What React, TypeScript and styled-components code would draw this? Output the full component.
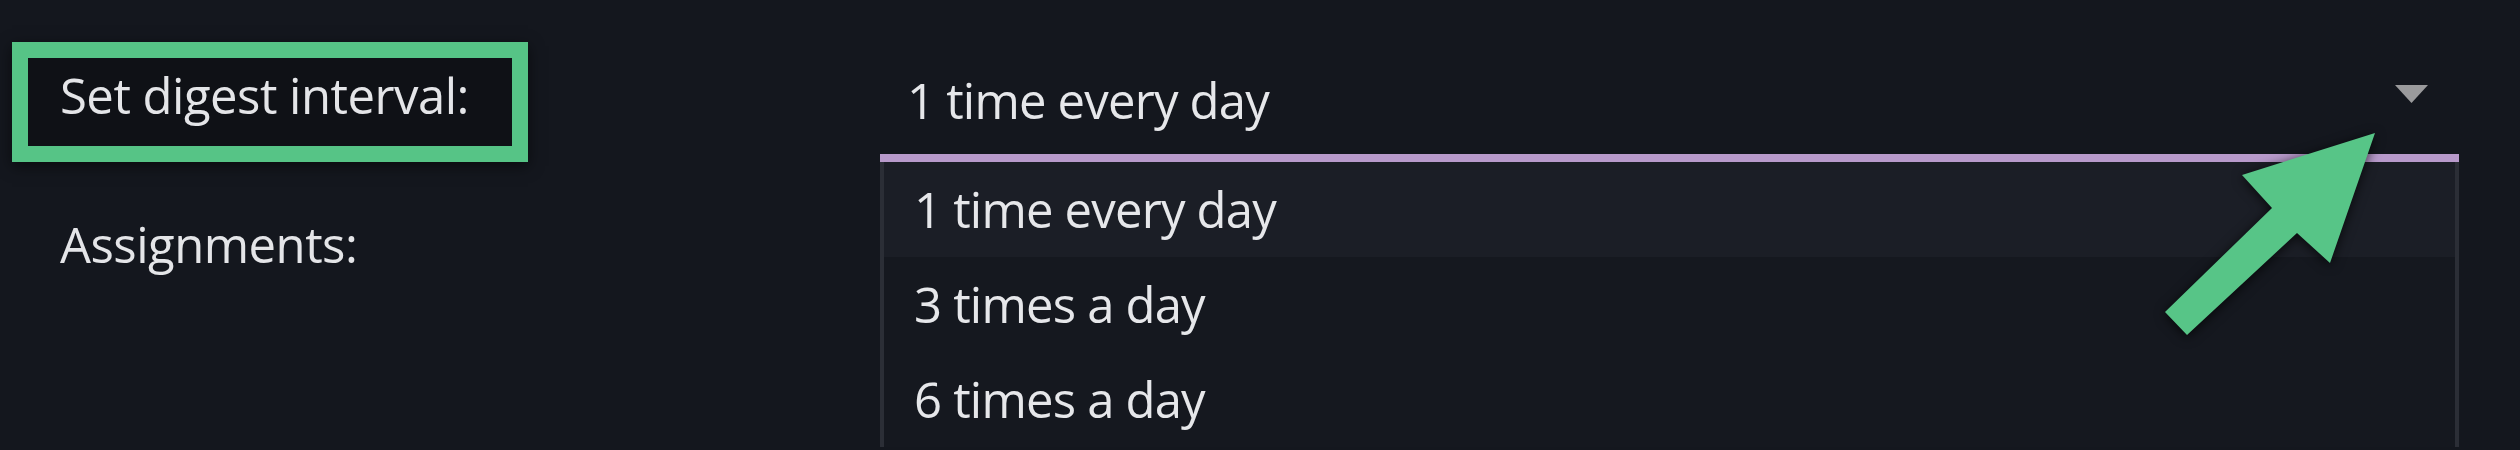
import React from "react";
import styled, { createGlobalStyle } from "styled-components";

const GlobalStyle = createGlobalStyle`
  html, body {
    margin: 0;
    padding: 0;
    background: #14171e;
  }
  body {
    font-family: "Open Sans", "Noto Sans", "DejaVu Sans", sans-serif;
    color: #e4e5e8;
  }
`;

const Page = styled.div`
  position: relative;
  width: 2520px;
  height: 450px;
  overflow: hidden;
  background: #14171e;
  box-sizing: border-box;
  padding: 42px 0 0 12px;
`;

const Form = styled.div`
  display: grid;
  grid-template-columns: 868px 1579px;
  row-gap: 49px;
`;

const LabelCell = styled.div`
  display: flex;
  align-items: flex-start;
`;

const Highlight = styled.div`
  box-sizing: border-box;
  width: 516px;
  height: 120px;
  border: 16px solid #56c486;
  padding: 4px 0 0 32px;
  background: #0f1116;
  box-shadow: 0 4px 14px rgba(0, 0, 0, 0.55);
`;

const Label = styled.span<{ $indent?: number }>`
  display: block;
  font-size: 49px;
  line-height: 67px;
  letter-spacing: -0.5px;
  color: #e4e5e8;
  padding-left: ${(p) => p.$indent ?? 0}px;
  white-space: nowrap;
`;

const SelectWrap = styled.div`
  position: relative;
`;

const Trigger = styled.div`
  box-sizing: border-box;
  height: 120px;
  display: flex;
  align-items: flex-start;
  justify-content: space-between;
  padding: 25px 31px 0 27px;
  border-bottom: 8px solid #b89acb;
`;

const Value = styled.span`
  font-size: 49px;
  line-height: 67px;
  letter-spacing: -0.8px;
  color: #e6e7ea;
  white-space: nowrap;
`;

const Caret = styled.svg`
  margin-top: 18px;
  width: 33px;
  height: 18px;
  flex: none;
`;

const Menu = styled.ul`
  position: absolute;
  top: 100%;
  left: 0;
  right: 0;
  margin: 0;
  padding: 0;
  list-style: none;
  background: #15181f;
  border-left: 4px solid #2b2e36;
  border-right: 4px solid #2b2e36;
  z-index: 2;
`;

const Item = styled.li<{ $active?: boolean }>`
  box-sizing: border-box;
  height: 95px;
  display: flex;
  align-items: center;
  padding-left: 30px;
  font-size: 49px;
  line-height: 67px;
  letter-spacing: -0.8px;
  color: #e6e7ea;
  background: ${(p) => (p.$active ? "#1b1e26" : "transparent")};
`;

const Pointer = styled.svg`
  position: absolute;
  left: 2140px;
  top: 110px;
  width: 260px;
  height: 250px;
  z-index: 5;
  overflow: visible;
  filter: drop-shadow(0 2px 6px rgba(0, 0, 0, 0.7));
`;

const options = ["1 time every day", "3 times a day", "6 times a day"];

export default function App() {
  return (
    <>
      <GlobalStyle />
      <Page>
        <Form>
          <LabelCell>
            <Highlight>
              <Label>Set digest interval:</Label>
            </Highlight>
          </LabelCell>
          <SelectWrap>
            <Trigger>
              <Value>1 time every day</Value>
              <Caret viewBox="0 0 33 18">
                <polygon points="0,0 33,0 16.5,18" fill="#9a9a9c" />
              </Caret>
            </Trigger>
            <Menu>
              {options.map((o, i) => (
                <Item key={o} $active={i === 0}>
                  {o}
                </Item>
              ))}
            </Menu>
          </SelectWrap>
          <LabelCell>
            <Label $indent={48}>Assignments:</Label>
          </LabelCell>
          <div />
        </Form>
        <Pointer viewBox="2140 110 260 250">
          <polygon
            points="2375,133 2330,263 2297,233 2187,335 2165,312 2272,208 2242,175"
            fill="#57c587"
          />
        </Pointer>
      </Page>
    </>
  );
}
